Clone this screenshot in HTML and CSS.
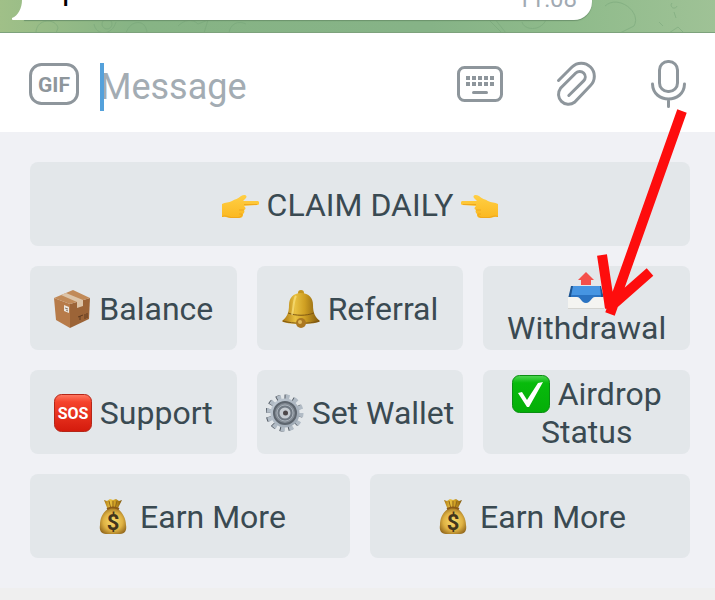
FILE: index.html
```
<!DOCTYPE html>
<html lang="en">
<head>
    <meta charset="UTF-8">
    <meta name="viewport" content="width=device-width, initial-scale=1.0">
    <title>Chat</title>
    <link rel="stylesheet" href="styles.css">
</head>
<body>
    <!-- shared emoji -->
    <svg class="defs" aria-hidden="true">
        <defs>
            <linearGradient id="skin" x1="0" y1="0" x2="0" y2="1">
                <stop offset="0" stop-color="#ffcf45"/>
                <stop offset="1" stop-color="#fbb820"/>
            </linearGradient>
            <linearGradient id="gold" x1="0" y1="0" x2="1" y2="0">
                <stop offset="0" stop-color="#a8730f"/>
                <stop offset="0.35" stop-color="#e8c040"/>
                <stop offset="0.6" stop-color="#cf9f22"/>
                <stop offset="1" stop-color="#7d550c"/>
            </linearGradient>
            <radialGradient id="sack" cx="0.5" cy="0.5" r="0.6">
                <stop offset="0" stop-color="#fbdc6e"/>
                <stop offset="0.6" stop-color="#dfb243"/>
                <stop offset="1" stop-color="#93681c"/>
            </radialGradient>
            <linearGradient id="red" x1="0" y1="0" x2="0" y2="1">
                <stop offset="0" stop-color="#ff7a64"/>
                <stop offset="0.2" stop-color="#f5432c"/>
                <stop offset="1" stop-color="#d41a0c"/>
            </linearGradient>
            <linearGradient id="green" x1="0" y1="0" x2="0" y2="1">
                <stop offset="0" stop-color="#4ed552"/>
                <stop offset="0.2" stop-color="#08bb0c"/>
                <stop offset="1" stop-color="#04ae08"/>
            </linearGradient>
            <linearGradient id="steel" x1="0" y1="0" x2="1" y2="1">
                <stop offset="0" stop-color="#c3ccd6"/>
                <stop offset="1" stop-color="#98a3ae"/>
            </linearGradient>
        </defs>
        <symbol id="hand" viewBox="0 0 38 38">
            <path d="M1 18 C4 16 8 17 11 15 C14 13 17 13 20 10 C23 8 27 9 25 12 L22 15 L36 15 C39 15 39 19 36 19 L23 20 C25 22 25 23 23 24 C24 26 23 27 22 28 C22 31 21 32 17 32 L10 32 C7 32 5 30 1 31 Z" fill="url(#skin)"/>
            <path d="M1 30.500 C5 29 7 31 10 31.500 L17 31.500 C20 31 21 30 21 28 M18 24 H23 M18 28 H21 M23 18.500 H36" fill="none" stroke="#f0a81c" stroke-width="1"/>
        </symbol>
        <symbol id="bag" viewBox="0 0 38 38">
            <path d="M10 2 L13 3 L16 1 L19 2 L22 1 L25 3 L28 2 L23 12 H14 Z" fill="url(#gold)"/>
            <path d="M15 3 L17 11 M19 3 V11 M23 3 L21 11" stroke="#8f671c" stroke-width="1"/>
            <path d="M14 11 C8 15 6 21 6 27 C5 32 7 36 12 36 H26 C31 36 33 32 32 27 C32 21 29 15 24 11 Z" fill="url(#sack)"/>
            <path d="M13 11 C17 9 21 9 25 11" fill="none" stroke="#8b5a18" stroke-width="2"/>
            <text x="19" y="32" class="bag-sign">$</text>
        </symbol>
    </svg>

    <main class="app">
        <section class="chat">
            <svg class="doodles" viewBox="0 0 715 33" preserveAspectRatio="none" aria-hidden="true">
                <path d="M36 33 C36 18 56 18 58 28 L56 33 M94 24 C96 36 112 36 116 22 M126 33 C130 20 146 18 147 33 M178 26 C184 20 192 18 198 24 L208 20 L204 33 M229 33 C230 24 238 20 246 24 M489 20 L502 33 M494 18 L506 33 M522 22 C524 30 540 32 546 20 M605 6 C618 -6 642 12 634 26 L620 33 M659 22 L663 26 M672 3 A3 3 0 1 0 677 6 M674 12 L676 18 M669 33 L678 27 L684 33"/>
                <circle cx="107" cy="24" r="5"/>
            </svg>
            <div class="bubble">
                <svg class="tail" viewBox="0 0 24 60" aria-hidden="true"><path d="M24 0 H10 V40 C10 48 6 56 0 58 C-1 59 0 60 2 60 H24 Z" fill="#fff"/></svg>
                <span class="message">p</span>
                <time class="time">11:08</time>
            </div>
        </section>

        <form class="composer">
            <button type="button" class="icon-button" aria-label="GIF">
                <svg width="50" height="48" viewBox="0 0 50 48">
                    <rect x="1.500" y="4.500" width="47" height="39" rx="11" class="line"/>
                    <text x="25" y="32" class="gif">GIF</text>
                </svg>
            </button>
            <div class="field">
                <input type="text" placeholder="Message" aria-label="Message">
                <span class="caret"></span>
            </div>
            <div class="tools">
                <button type="button" class="icon-button" aria-label="Keyboard">
                    <svg width="46" height="48" viewBox="0 0 46 48">
                        <rect x="1.500" y="7.500" width="43" height="33" rx="6" class="line"/>
                        <path d="M9 18H37M9 24H37" fill="none" stroke="#8e969c" stroke-width="4" stroke-dasharray="4 2"/>
                        <path d="M16.500 32.500H29.500" class="line"/>
                    </svg>
                </button>
                <button type="button" class="icon-button" aria-label="Attach">
                    <svg width="44" height="48" viewBox="5 0 44 48">
                        <path d="M8.500 20.500 L22 7 A13 13 0 0 1 40.500 25.500 L24.500 42.300 A10 10 0 0 1 10.500 28.300 L25.800 13 A5.500 5.500 0 0 1 33.600 20.900 L18.800 35.500" class="line"/>
                    </svg>
                </button>
                <button type="button" class="icon-button" aria-label="Voice">
                    <svg width="35" height="48" viewBox="0 0 35 48">
                        <rect x="8.500" y="1.500" width="18" height="30" rx="8.500" class="line"/>
                        <path d="M1.500 24 C2 44 33 44 33.500 24 M17.500 39.500 V46.500" class="line"/>
                    </svg>
                </button>
            </div>
        </form>

        <section class="keyboard">
            <div class="row">
                <button type="button" class="key"><span>
                    <svg class="emoji"><use href="#hand"/></svg>
                    CLAIM DAILY
                    <svg class="emoji flip"><use href="#hand"/></svg>
                </span></button>
            </div>
            <div class="row">
                <button type="button" class="key"><span>
                    <svg class="emoji" viewBox="0 0 38 38">
                        <path d="M1 8 L17 14 V38 L3 30 Z" fill="#b77b49"/>
                        <path d="M17 14 L37 8 L36 29 L17 38 Z" fill="#9c6437"/>
                        <path d="M1 8 L20 0 L37 8 L17 14 Z" fill="#c18a58"/>
                        <path d="M8 5 L13 3 L30 10 V16 L24 18 V12 Z" fill="#dcc4a8"/>
                        <path d="M11 15 L16 17 V23 L11 21 Z" fill="#ece7df"/>
                        <path d="M12 18 L15 19 M13 20 L15 21" stroke="#88796c" stroke-width="1"/>
                        <path d="M25 27 L30 25 M27 26 V30 M32 24 V29 M34 23 V28" stroke="#603b20" stroke-width="1"/>
                    </svg>
                    Balance
                </span></button>
                <button type="button" class="key"><span>
                    <svg class="emoji" viewBox="0 0 38 38">
                        <circle cx="19" cy="3" r="3" fill="#c4951e"/>
                        <path d="M19 3 C11 3 7 8 7 15 C7 23 5 27 0 31 C2 35 36 35 38 31 C33 27 31 23 31 15 C31 8 27 3 19 3 Z" fill="url(#gold)"/>
                        <path d="M6 23 C14 26 24 26 32 23 M1 31 C11 34 27 34 37 31" fill="none" stroke="#805812" stroke-width="1"/>
                        <path d="M14 6 C11 11 12 18 10 25" fill="none" stroke="#ffe98a" stroke-width="2" opacity="0.6"/>
                        <circle cx="19" cy="33" r="5" fill="#ab7822"/>
                        <circle cx="18" cy="32" r="2" fill="#e0b95a"/>
                    </svg>
                    Referral
                </span></button>
                <button type="button" class="key"><span>
                    <svg class="emoji" viewBox="0 0 38 38">
                        <path d="M18 1 L26 9 H23 V14 H13 V9 H10 Z" fill="#f4504b"/>
                        <path d="M3 15 H33 L36 28 L24 34 H12 L0 28 Z" fill="#1c5592"/>
                        <path d="M5 15 H32 L33 25 H3 Z" fill="#4695e2"/>
                        <path d="M3 24 H33 V28 L24 33 H12 L3 28 Z" fill="#2a73c2"/>
                        <path d="M0 26 H9 C13 26 13 32 18 32 C23 32 23 26 27 26 H36 V37 Q36 38 35 38 H1 Q0 38 0 37 Z" fill="#f4f4f1"/>
                        <path d="M0 37.500 H36" stroke="#d4d4d0" stroke-width="1"/>
                    </svg>
                    Withdrawal
                </span></button>
            </div>
            <div class="row">
                <button type="button" class="key"><span>
                    <svg class="emoji" viewBox="0 0 38 38">
                        <rect x="0.500" y="0.500" width="37" height="37" rx="7" fill="url(#red)" stroke="#b52618"/>
                        <text x="19" y="25" class="sos">SOS</text>
                    </svg>
                    Support
                </span></button>
                <button type="button" class="key"><span>
                    <svg class="emoji" viewBox="0 0 38 38">
                        <circle cx="18" cy="19" r="16" fill="none" stroke="#515861" stroke-width="5" stroke-dasharray="4 4.380"/>
                        <circle cx="19" cy="19" r="16" fill="none" stroke="#b1bbc5" stroke-width="5" stroke-dasharray="4 4.380"/>
                        <circle cx="19" cy="19" r="14.500" fill="url(#steel)"/>
                        <circle cx="19" cy="19" r="11" fill="#858d96" stroke="#5d656e" stroke-width="2"/>
                        <circle cx="19" cy="19" r="8" fill="#707983" stroke="#a9b1ba"/>
                        <circle cx="19" cy="19" r="5.500" fill="#c6ccd2"/>
                        <circle cx="19.500" cy="19" r="2.500" fill="#4c4749"/>
                    </svg>
                    Set Wallet
                </span></button>
                <button type="button" class="key"><span>
                    <svg class="emoji" viewBox="0 0 38 38">
                        <rect x="0.500" y="0.500" width="37" height="37" rx="7" fill="url(#green)" stroke="#0a8e12"/>
                        <path d="M6 18 L10 17 L15 25 L26 8 L31 7 L17 32 H15 Z" fill="#fff"/>
                    </svg>
                    Airdrop Status
                </span></button>
            </div>
            <div class="row">
                <button type="button" class="key"><span>
                    <svg class="emoji"><use href="#bag"/></svg>
                    Earn More
                </span></button>
                <button type="button" class="key"><span>
                    <svg class="emoji"><use href="#bag"/></svg>
                    Earn More
                </span></button>
            </div>
        </section>

        <!-- arrow pointing at Withdrawal -->
        <svg class="arrow" viewBox="0 0 100 220" aria-hidden="true">
            <path d="M92 11 L20 214 M12 155 L20 208 M60 172 L18 209" fill="none" stroke="#fe0d0d" stroke-width="10"/>
        </svg>
    </main>
</body>
</html>
```

FILE: styles.css
```
* {
    box-sizing: border-box;
}

body {
    margin: 0;
    background-color: #efefef;
    font-family: Roboto, "Liberation Sans", sans-serif;
}

.defs {
    position: absolute;
    width: 0;
    height: 0;
}

.app {
    position: relative;
}

/* bottom edge of the chat */
.chat {
    position: relative;
    display: flex;
    align-items: flex-end;
    height: 33px;
    padding: 0 123px 12px 12px;
    overflow: hidden;
    background: linear-gradient(90deg, #a0c088, #87b485 18%, #86b387 60%, #8fbb8b 80%, #9fc296);
    border-bottom: 1px solid #7da27c;
}

.doodles {
    position: absolute;
    top: 0;
    left: 0;
    width: 100%;
    height: 33px;
    fill: none;
    stroke: #76a579;
    stroke-width: 1;
    opacity: 0.5;
}

.bubble {
    position: relative;
    display: flex;
    flex: 1;
    align-items: flex-end;
    justify-content: space-between;
    height: 60px;
    margin-left: 12px;
    padding: 0 15px 7px 38px;
    background-color: #fff;
    border-radius: 0 18px 18px 0;
    box-shadow: 0 1px 1px #6c936c;
}

.tail {
    position: absolute;
    left: -12px;
    bottom: 0;
    width: 24px;
    height: 60px;
}

.message {
    padding-bottom: 6px;
    font-size: 32px;
    line-height: 36px;
    color: #000;
}

.time {
    font-size: 24px;
    line-height: 28px;
    color: #a1aab3;
}

/* message box */
.composer {
    display: flex;
    align-items: center;
    height: 99px;
    padding: 3px 29px 0;
    background-color: #fff;
}

.icon-button {
    display: block;
    padding: 0;
    border: none;
    background: none;
    font-family: inherit;
    cursor: pointer;
}

.icon-button svg {
    display: block;
}

.line {
    fill: none;
    stroke: #8e969c;
    stroke-width: 3;
    stroke-linecap: round;
}

.gif {
    font-size: 21px;
    font-weight: bold;
    text-anchor: middle;
    fill: #8e969c;
}

.field {
    position: relative;
    flex: 1;
    min-width: 0;
    margin-left: 21px;
    padding-top: 6px;
}

.field input {
    display: block;
    width: 100%;
    height: 48px;
    padding: 0;
    border: none;
    outline: none;
    background: none;
    font-family: inherit;
    font-size: 36px;
    color: #222;
}

.field input::placeholder {
    color: #a3acb3;
    opacity: 1;
}

.caret {
    position: absolute;
    left: 0;
    bottom: 0;
    width: 4px;
    height: 48px;
    background-color: #54a1db;
}

.tools {
    display: flex;
    gap: 52px;
}

/* bot keyboard */
.keyboard {
    display: flex;
    flex-direction: column;
    gap: 20px;
    padding: 30px 25px 30px 30px;
    background-color: #f0f1f5;
}

.row {
    display: flex;
    gap: 20px;
}

.key {
    display: flex;
    flex: 1;
    align-items: center;
    justify-content: center;
    min-width: 0;
    min-height: 84px;
    padding: 2px 6px 0;
    border: none;
    border-radius: 8px;
    background-color: #e3e7ea;
    font-family: inherit;
    font-size: 32px;
    line-height: 38px;
    color: #3a4a52;
    cursor: pointer;
}

.emoji {
    width: 38px;
    height: 38px;
    vertical-align: -8px;
}

.flip {
    transform: scaleX(-1);
}

.sos {
    font-size: 16px;
    font-weight: bold;
    text-anchor: middle;
    fill: #fff;
}

.bag-sign {
    font-size: 22px;
    font-weight: bold;
    text-anchor: middle;
    fill: #42351c;
}

.arrow {
    position: absolute;
    top: 100px;
    right: 25px;
    width: 100px;
    height: 220px;
    pointer-events: none;
}
```
